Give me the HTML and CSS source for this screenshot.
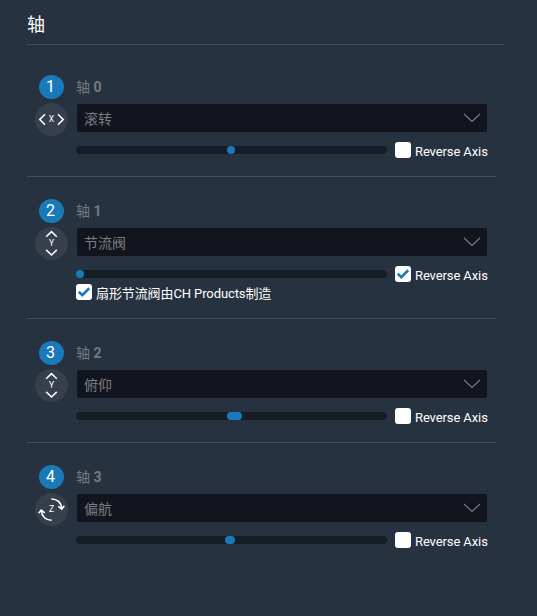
FILE: index.html
```html
<!DOCTYPE html>
<html lang="zh-CN">
<head>
  <meta charset="UTF-8">
  <title>轴</title>
  <link rel="stylesheet" href="styles.css">
</head>
<body>
  <svg width="0" height="0" class="defs">
    <symbol id="chevron" viewBox="0 0 18 10">
      <path d="M1 1 L9 8.5 L17 1" fill="none" stroke="currentColor" stroke-width="1.1"/>
    </symbol>
    <symbol id="check" viewBox="0 0 16 16">
      <path d="M2.8 7.8 L6.3 11.1 L13.2 4.3" fill="none" stroke="currentColor" stroke-width="2.6"/>
    </symbol>
    <symbol id="arrows-x" viewBox="0 0 33 33">
      <path d="M10 11.3 L4.8 16.5 L10 21.7 M23 11.3 L28.2 16.5 L23 21.7" fill="none" stroke="currentColor" stroke-width="1.6"/>
    </symbol>
    <symbol id="arrows-y" viewBox="0 0 33 33">
      <path d="M11.2 9.7 L16.5 4.6 L21.8 9.7 M11.2 22.9 L16.5 28 L21.8 22.9" fill="none" stroke="currentColor" stroke-width="1.5"/>
    </symbol>
    <symbol id="arrows-z" viewBox="0 0 33 33">
      <path d="M16.3 5.9 C22 5.8 26.3 9.5 26.7 15.6 M23.2 13.4 L26.8 16.2 L29.3 12.8 M16.7 27.3 C11 27.4 6.7 23.5 6.3 17.6 M3.7 20.3 L6.2 17 L9.8 19.8" fill="none" stroke="currentColor" stroke-width="1.5"/>
    </symbol>
  </svg>

  <main>
    <h1>轴</h1>

    <section class="axis">
      <div class="axis-side">
        <span class="badge">1</span>
        <span class="axis-icon"><svg><use href="#arrows-x"/></svg><span>X</span></span>
      </div>
      <div class="axis-body">
        <h2>轴 <b>0</b></h2>
        <div class="select"><span>滚转</span><svg><use href="#chevron"/></svg></div>
        <div class="controls">
          <div class="track"><div class="thumb" style="margin-left: 151px; width: 8px"></div></div>
          <label class="option"><span class="box"></span>Reverse Axis</label>
        </div>
      </div>
    </section>

    <section class="axis">
      <div class="axis-side">
        <span class="badge">2</span>
        <span class="axis-icon"><svg><use href="#arrows-y"/></svg><span>Y</span></span>
      </div>
      <div class="axis-body">
        <h2>轴 <b>1</b></h2>
        <div class="select"><span>节流阀</span><svg><use href="#chevron"/></svg></div>
        <div class="controls">
          <div class="track"><div class="thumb" style="margin-left: 0; width: 8px"></div></div>
          <label class="option"><span class="box"><svg><use href="#check"/></svg></span>Reverse Axis</label>
        </div>
        <label class="option throttle"><span class="box"><svg><use href="#check"/></svg></span>扇形节流阀由CH Products制造</label>
      </div>
    </section>

    <section class="axis">
      <div class="axis-side">
        <span class="badge">3</span>
        <span class="axis-icon"><svg><use href="#arrows-y"/></svg><span>Y</span></span>
      </div>
      <div class="axis-body">
        <h2>轴 <b>2</b></h2>
        <div class="select"><span>俯仰</span><svg><use href="#chevron"/></svg></div>
        <div class="controls">
          <div class="track"><div class="thumb" style="margin-left: 151px; width: 15px"></div></div>
          <label class="option"><span class="box"></span>Reverse Axis</label>
        </div>
      </div>
    </section>

    <section class="axis">
      <div class="axis-side">
        <span class="badge">4</span>
        <span class="axis-icon"><svg><use href="#arrows-z"/></svg><span>Z</span></span>
      </div>
      <div class="axis-body">
        <h2>轴 <b>3</b></h2>
        <div class="select"><span>偏航</span><svg><use href="#chevron"/></svg></div>
        <div class="controls">
          <div class="track"><div class="thumb" style="margin-left: 149px; width: 10px"></div></div>
          <label class="option"><span class="box"></span>Reverse Axis</label>
        </div>
      </div>
    </section>
  </main>
</body>
</html>
```
FILE: styles.css
```css
* {
  box-sizing: border-box;
}

body {
  margin: 0;
  min-height: 616px;
  background-color: #26323f;
  color: #fff;
  font-family: Roboto, "Noto Sans CJK SC", sans-serif;
  font-size: 13px;
}

.defs {
  display: block;
}

main {
  width: 477px;
  margin-left: 27px;
}

h1 {
  height: 45px;
  margin: 0 0 8px;
  padding-top: 4px;
  border-bottom: 1px solid #434e58;
  font-size: 18px;
  font-weight: 400;
  line-height: 42px;
}

.axis {
  display: flex;
  gap: 8px;
  width: 469px;
  height: 124px;
  padding: 22px 8px 0;
  border-bottom: 1px solid #434e59;
}

.axis:nth-of-type(2) {
  height: 142px;
}

.axis:last-child {
  border-bottom: none;
}

.axis-side {
  display: flex;
  flex-direction: column;
  align-items: center;
  gap: 4px;
  width: 33px;
}

.badge {
  width: 25px;
  height: 24px;
  padding-right: 2px;
  border-radius: 50%;
  background-color: #1a7ab9;
  font-size: 16px;
  line-height: 24px;
  text-align: center;
}

.axis-icon {
  display: grid;
  place-items: center;
  width: 33px;
  height: 33px;
  border-radius: 50%;
  background-color: #373f4c;
  font-size: 8.5px;
  line-height: 33px;
}

.axis-icon > * {
  grid-area: 1 / 1;
}

.axis-icon svg {
  width: 33px;
  height: 33px;
}

.axis-body {
  width: 412px;
}

h2 {
  height: 29px;
  margin: 0;
  color: #747a81;
  font-size: 14px;
  font-weight: 400;
  line-height: 24px;
}

.select {
  display: flex;
  align-items: center;
  justify-content: space-between;
  height: 28px;
  margin: 0 1px;
  padding: 0 6px 0 7px;
  border-radius: 2px;
  background-color: #12151d;
  color: #7b7e84;
  font-size: 14px;
  line-height: 26px;
}

.select span {
  padding-top: 2px;
}

.select svg {
  width: 18px;
  height: 10px;
}

.controls {
  display: flex;
  align-items: center;
  gap: 8px;
  height: 16px;
  margin-top: 10px;
}

.track {
  flex: none;
  width: 311px;
  height: 8px;
  border-radius: 4px;
  background-color: #151d26;
}

.thumb {
  height: 8px;
  border-radius: 4px;
  background-color: #1a7ab9;
}

.option {
  display: flex;
  gap: 4px;
  height: 16px;
  letter-spacing: -0.1px;
  line-height: 19px;
  white-space: nowrap;
}

.box {
  flex: none;
  width: 16px;
  height: 16px;
  border-radius: 3px;
  background-color: #fff;
  color: #1a7ab9;
}

.box svg {
  display: block;
  width: 16px;
  height: 16px;
}

.throttle {
  margin-top: 2px;
}
```
